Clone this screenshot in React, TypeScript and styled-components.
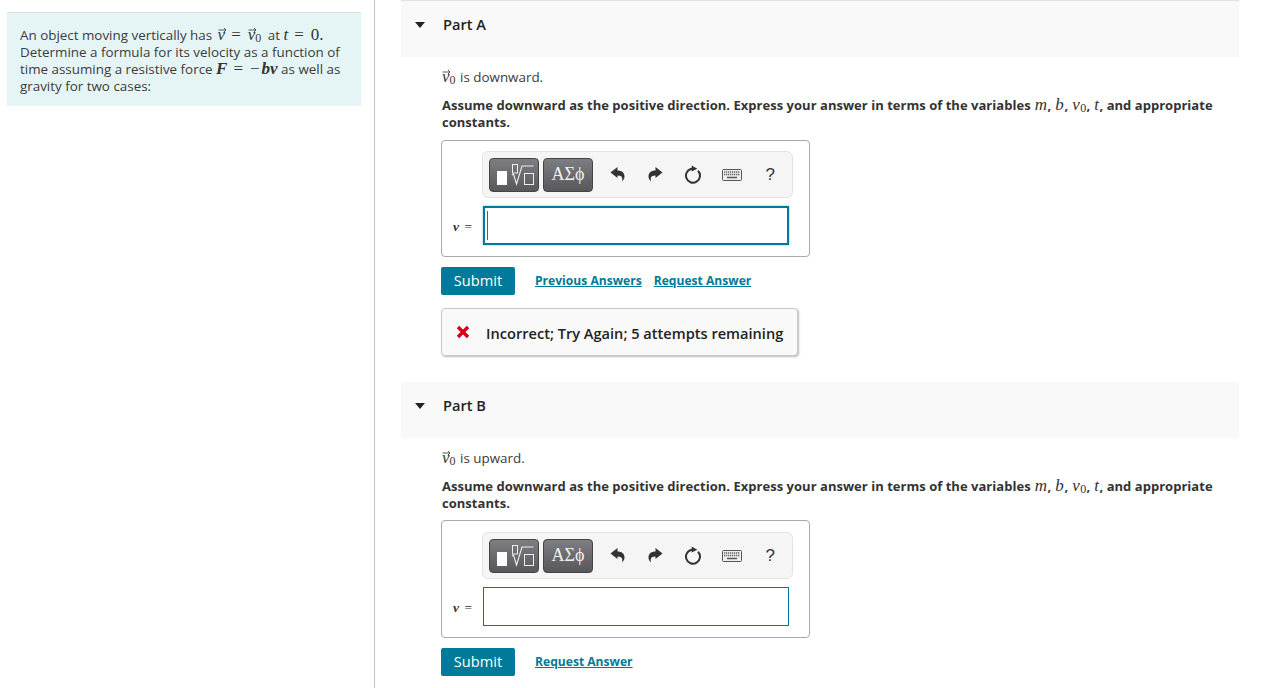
import React from "react";
import styled, { createGlobalStyle } from "styled-components";

const Global = createGlobalStyle`
  html, body { margin: 0; padding: 0; background: #fff; overflow: hidden; }
  body { font-family: "Open Sans", "Noto Sans", "Liberation Sans", sans-serif; color: #333; }
`;

const Page = styled.div`
  display: flex;
  width: 1283px;
  height: 688px;
  overflow: hidden;
`;
const LeftColumn = styled.aside`
  width: 354px;
  height: 688px;
  flex: none;
  border-right: 1px solid #b9c9d6;
  padding: 12px 13px 0 7px;
`;
const Intro = styled.div`
  background: #e5f5f6;
  border-top: 1px solid #dcdfe0;
  height: 94px;
  padding: 14px 13px 0 13px;
  box-sizing: border-box;
  font-size: 13.4px;
  line-height: 17px;
  color: #3b3b3b;
`;
const RightColumn = styled.main`
  margin-left: 26px;
  width: 838px;
  flex: none;
`;
const PartHeader = styled.div<{ $first?: boolean }>`
  height: ${(p) => (p.$first ? 57 : 56)}px;
  margin-top: ${(p) => (p.$first ? 0 : 26)}px;
  background: #f9f9f9;
  border-top: ${(p) => (p.$first ? "1px solid #e2e2e2" : "none")};
  box-sizing: border-box;
  display: flex;
  align-items: flex-start;
  padding: 14px 0 0 14px;
`;
const Caret = styled.span`
  width: 0;
  height: 0;
  border-left: 5.5px solid transparent;
  border-right: 5.5px solid transparent;
  border-top: 6px solid #222;
  margin-top: 7px;
  margin-right: 18px;
`;
const PartTitle = styled.h2`
  margin: 0;
  font-size: 14.6px;
  line-height: 18px;
  font-weight: 600;
  color: #222;
`;
const PartBody = styled.section`
  padding: 12px 0 0 40px;
`;
const Statement = styled.p`
  margin: 0 0 11px 1px;
  height: 17px;
  font-size: 13.4px;
  line-height: 17px;
  color: #3b3b3b;
`;
const Instruction = styled.p<{ $tight?: boolean }>`
  margin: 0 0 ${(p) => (p.$tight ? 8 : 9)}px 1px;
  height: 34px;
  font-size: 13px;
  line-height: 17px;
  font-weight: 700;
  color: #333;
  width: 790px;
  letter-spacing: 0.03px;
`;
const MathText = styled.span<{ $bold?: boolean; $pad?: boolean }>`
  font-family: "Liberation Serif", "DejaVu Serif", serif;
  font-style: italic;
  font-size: 17px;
  line-height: 0;
  font-weight: ${(p) => (p.$bold ? 700 : 400)};
  padding: 0 ${(p) => (p.$pad ? 0.6 : 0)}px;
  color: #333;
`;
const MathUp = styled.span`
  font-family: "Liberation Serif", "DejaVu Serif", serif;
  font-size: 17px;
  line-height: 0;
  font-weight: 400;
  color: #333;
`;
const Equals = styled(MathUp)`
  margin: 0 7px 0 6px;
`;
const Minus = styled(MathUp)`
  margin-right: 2px;
`;
const Sub = styled.sub<{ $after?: number }>`
  font-family: "Liberation Serif", serif;
  font-style: normal;
  font-size: 12px;
  font-weight: 400;
  line-height: 0;
  vertical-align: -2px;
  margin-right: ${(p) => p.$after ?? 0}px;
`;
const VectorWrap = styled.span<{ $lead?: boolean }>`
  position: relative;
  line-height: 0;
  margin-left: ${(p) => (p.$lead ? 2 : 0)}px;
`;
const VectorArrow = styled.svg`
  position: absolute;
  left: 0;
  top: 1px;
  width: 9px;
  height: 6px;
`;
const Vec: React.FC<{ lead?: boolean }> = ({ lead }) => (
  <VectorWrap $lead={lead}>
    <MathText>v</MathText>
    <VectorArrow viewBox="0 0 9 6">
      <path d="M0.5 3h7.5M6 1l2 2-2 2" fill="none" stroke="#333" strokeWidth="0.8" />
    </VectorArrow>
  </VectorWrap>
);
const AnswerBox = styled.div<{ $tight?: boolean }>`
  width: 369px;
  height: ${(p) => (p.$tight ? 118 : 117)}px;
  box-sizing: border-box;
  border: 1px solid #a9a9a9;
  border-radius: 4px;
  padding-top: ${(p) => (p.$tight ? 11 : 10)}px;
`;
const Toolbar = styled.div`
  width: 311px;
  height: 47px;
  box-sizing: border-box;
  margin: 0 0 8px 40px;
  background: #f5f5f5;
  border: 1px solid #e3e3e3;
  border-radius: 6px;
  display: flex;
  align-items: center;
  padding-left: 6px;
`;
const ToolButton = styled.button<{ $w: number; $mr: number }>`
  width: ${(p) => p.$w}px;
  height: 34px;
  margin-right: ${(p) => p.$mr}px;
  padding: 0;
  box-sizing: border-box;
  border: 1px solid #444;
  border-radius: 4px;
  background: linear-gradient(#7e7e82, #58585c);
  display: flex;
  align-items: center;
  justify-content: center;
  color: #f0f0f0;
  font-family: "Liberation Serif", serif;
  font-size: 18px;
`;
const IconSlot = styled.span`
  width: 38.25px;
  display: flex;
  justify-content: center;
  align-items: center;
  color: #333;
  font-family: "Liberation Sans", sans-serif;
  font-size: 17px;
`;
const InputRow = styled.div`
  display: flex;
  align-items: center;
`;
const InputLabel = styled.span`
  width: 41px;
  flex: none;
  box-sizing: border-box;
  padding: 3px 0 0 11px;
  font-family: "Liberation Serif", serif;
  font-size: 13.5px;
  word-spacing: 2px;
  color: #333;
  white-space: pre;
`;
const ItalicV = styled.i`
  font-weight: 700;
`;
const AnswerInput = styled.div<{ $focused?: boolean }>`
  width: 306px;
  height: 39px;
  box-sizing: border-box;
  background: #fff;
  border: ${(p) => (p.$focused ? "2px solid #007a9b" : "1px solid #007a9b")};
  box-shadow: ${(p) => (p.$focused ? "0 0 2px #6fb6c9" : "none")};
  position: relative;
`;
const TextCursor = styled.span`
  position: absolute;
  left: 2px;
  top: 3px;
  bottom: 3px;
  width: 1px;
  background: #3a5fc0;
`;
const ActionRow = styled.div`
  display: flex;
  align-items: center;
  margin-top: 10px;
  height: 28px;
`;
const SubmitButton = styled.button`
  width: 74px;
  height: 28px;
  padding: 0 0 2px;
  border: none;
  border-radius: 2px;
  background: #007a9b;
  color: #fff;
  font-family: inherit;
  font-size: 14.6px;
  margin-right: 20px;
`;
const ActionLink = styled.a`
  color: #007a9b;
  font-size: 12.1px;
  font-weight: 700;
  text-decoration: underline;
  margin: 0 12px 2px 0;
`;
const Feedback = styled.div`
  width: 357px;
  height: 48px;
  margin-top: 13px;
  box-sizing: border-box;
  background: #f9f9f9;
  border: 1px solid #c8c8c8;
  border-radius: 4px;
  box-shadow: 1px 1px 2px #bbb;
  display: flex;
  align-items: center;
  padding: 1px 0 0 14px;
  font-size: 14.6px;
  font-weight: 600;
  color: #222;
`;
const FeedbackIcon = styled.svg`
  width: 14px;
  height: 14px;
  margin: -1px 16px 0 0;
  flex: none;
`;

const arrowPath =
  "M0.5 6.5L7.5 1v3.500c4 0 7 2 7 6 0 2-1 3.500-2.500 5 .5-2.500.5-4.500-1-5.300-.8-.5-2-.7-3.500-.7V12z";

const ToolIcons: React.FC = () => (
  <>
    <ToolButton $w={50} $mr={4} aria-label="templates">
      <svg width="48" height="32" viewBox="1 1 48 32">
        <rect x="8" y="13" width="10" height="14" fill="#fff" />
        <path d="M23 17l1.500-1 3 10 5.500-18h11.500" fill="none" stroke="#eee" strokeWidth="1.100" />
        <rect x="23.500" y="6.500" width="5" height="8.500" fill="none" stroke="#eee" strokeWidth="1" />
        <rect x="35.500" y="15.500" width="9" height="11" fill="none" stroke="#eee" strokeWidth="1" />
      </svg>
    </ToolButton>
    <ToolButton $w={50} $mr={5}>ΑΣϕ</ToolButton>
    <IconSlot>
      <svg width="15" height="17" viewBox="0 0 15 17">
        <path d={arrowPath} fill="#333" />
      </svg>
    </IconSlot>
    <IconSlot>
      <svg width="15" height="17" viewBox="0 0 15 17">
        <path d={arrowPath} fill="#333" transform="matrix(-1 0 0 1 15 0)" />
      </svg>
    </IconSlot>
    <IconSlot>
      <svg width="17" height="19" viewBox="0 0 17 19">
        <path d="M13 5.800A7 7 0 1 1 7.500 3.700" fill="none" stroke="#333" strokeWidth="2" />
        <path d="M6.700 0.500l5.600 3.300-5.600 2.700z" fill="#333" />
      </svg>
    </IconSlot>
    <IconSlot>
      <svg width="20" height="12" viewBox="0 0 20 12">
        <rect x="0.500" y="0.500" width="19" height="11" rx="1" fill="#eee" stroke="#555" />
        <path d="M2 3h16M2 5.500h16" stroke="#666" strokeWidth="1.300" strokeDasharray="1.300 0.700" />
        <path d="M5 8.500h10" stroke="#555" strokeWidth="1.500" />
      </svg>
    </IconSlot>
    <IconSlot>?</IconSlot>
  </>
);

const Expression: React.FC = () => (
  <>
    Assume downward as the positive direction. Express your answer in terms of the variables{" "}
    <MathText $pad>m</MathText>, <MathText $pad>b</MathText>, <MathText $pad>v</MathText>
    <Sub>0</Sub>, <MathText $pad>t</MathText>, and appropriate constants.
  </>
);

const Part: React.FC<{
  title: string;
  first?: boolean;
  direction: string;
  focused?: boolean;
  previous?: boolean;
  feedback?: boolean;
}> = ({ title, first, direction, focused, previous, feedback }) => (
  <>
    <PartHeader $first={first}>
      <Caret />
      <PartTitle>{title}</PartTitle>
    </PartHeader>
    <PartBody>
      <Statement>
        <Vec />
        <Sub $after={1}>0</Sub> is {direction}.
      </Statement>
      <Instruction $tight={!first}>
        <Expression />
      </Instruction>
      <AnswerBox $tight={!first}>
        <Toolbar>
          <ToolIcons />
        </Toolbar>
        <InputRow>
          <InputLabel>
            <ItalicV>v</ItalicV> =
          </InputLabel>
          <AnswerInput $focused={focused}>{focused && <TextCursor />}</AnswerInput>
        </InputRow>
      </AnswerBox>
      <ActionRow>
        <SubmitButton>Submit</SubmitButton>
        {previous && <ActionLink>Previous Answers</ActionLink>}
        <ActionLink>Request Answer</ActionLink>
      </ActionRow>
      {feedback && (
        <Feedback>
          <FeedbackIcon viewBox="0 0 14 14">
            <path d="M2 2l10 10M12 2L2 12" stroke="#d9001b" strokeWidth="3.400" fill="none" />
          </FeedbackIcon>
          Incorrect; Try Again; 5 attempts remaining
        </Feedback>
      )}
    </PartBody>
  </>
);

export default function App() {
  return (
    <Page>
      <Global />
      <LeftColumn>
        <Intro>
          An object moving vertically has <Vec lead />
          <Equals>=</Equals>
          <Vec />
          <Sub $after={3}>0</Sub> at <MathText>t</MathText>
          <Equals>=</Equals>
          <MathUp>0.</MathUp>
          <br />
          Determine a formula for its velocity as a function of time assuming a resistive force{" "}
          <MathText $bold>F</MathText>
          <Equals>=</Equals>
          <Minus>−</Minus>
          <MathText $bold>bv</MathText> as well as gravity for two cases:
        </Intro>
      </LeftColumn>
      <RightColumn>
        <Part title="Part A" first direction="downward" focused previous feedback />
        <Part title="Part B" direction="upward" />
      </RightColumn>
    </Page>
  );
}
